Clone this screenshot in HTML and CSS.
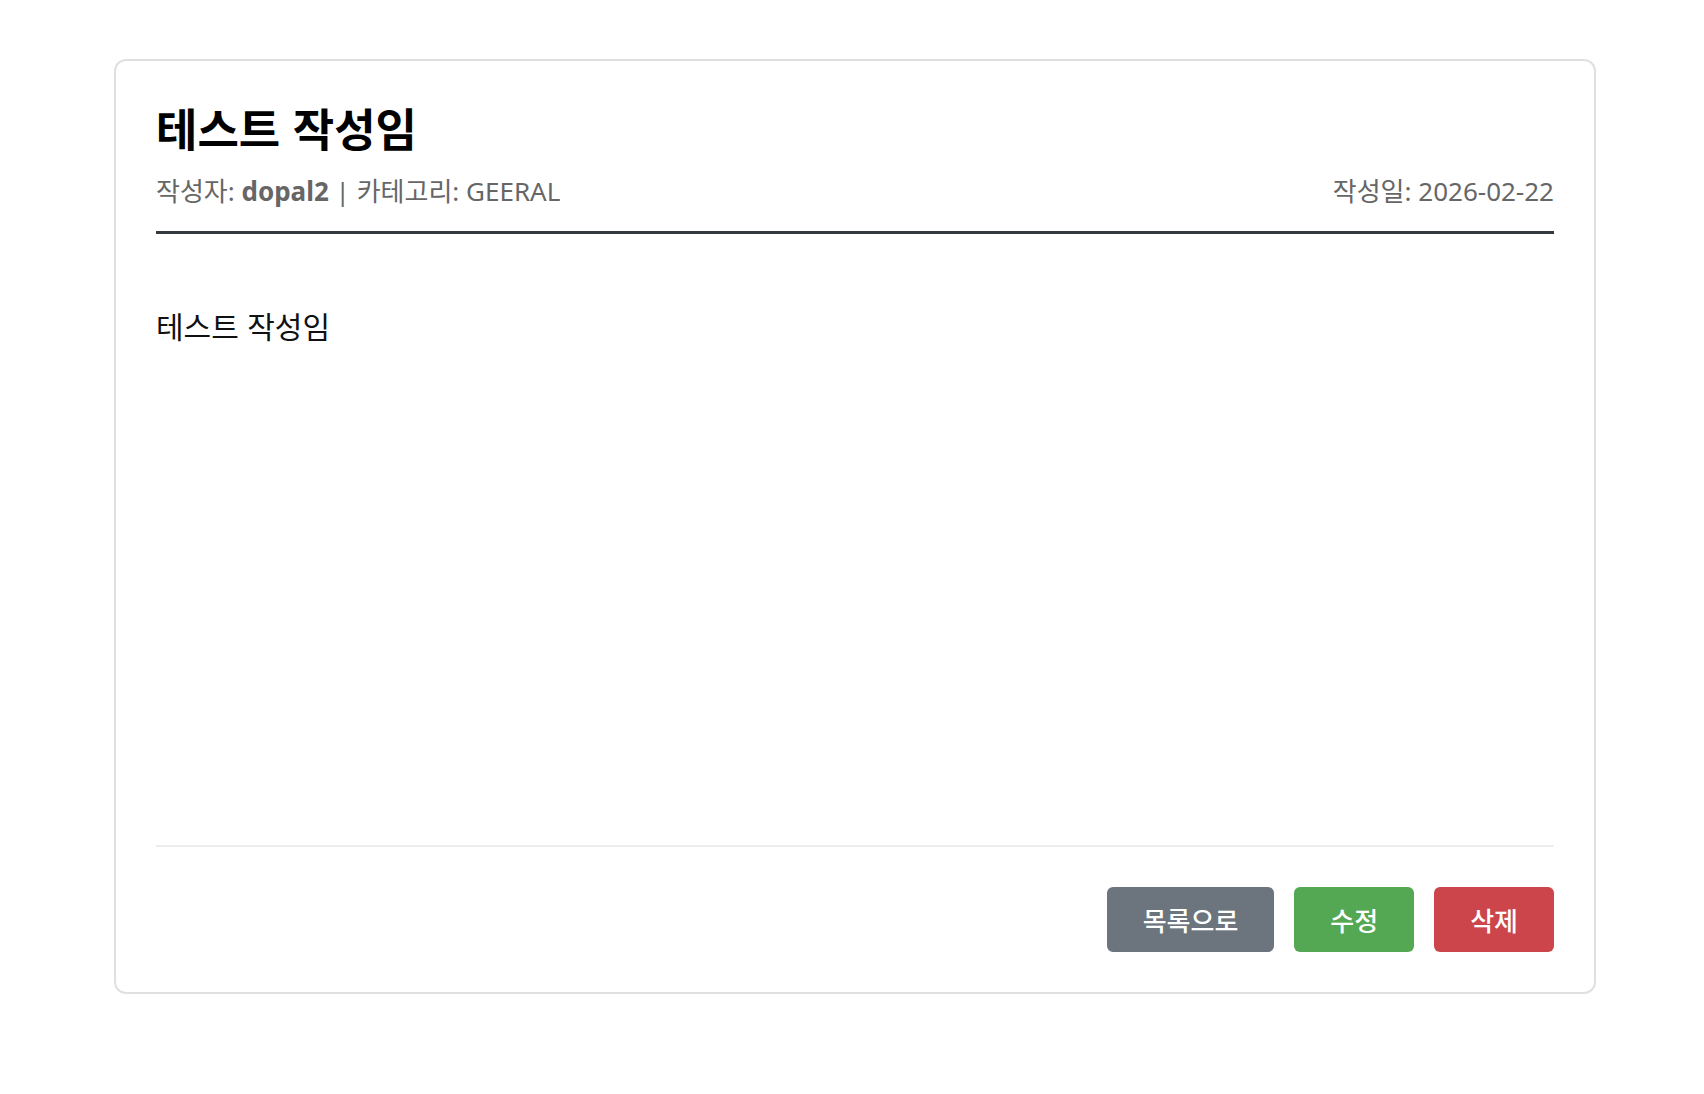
FILE: index.html
```html
<!DOCTYPE html>
<html lang="ko">
<head>
<meta charset="utf-8">
<title>테스트 작성임</title>
<link rel="stylesheet" href="styles.css">
</head>
<body>
<div class="card">
  <header class="post-header">
    <h1 class="post-title">테스트 작성임</h1>
    <div class="post-meta">
      <span class="meta-left">작성자: <b>dopal2</b> | 카테고리: GEERAL</span>
      <span class="meta-right">작성일: 2026-02-22</span>
    </div>
  </header>
  <section class="post-body">테스트 작성임</section>
  <footer class="post-actions">
    <button class="btn btn-gray">목록으로</button>
    <button class="btn btn-green">수정</button>
    <button class="btn btn-red">삭제</button>
  </footer>
</div>
</body>
</html>
```

FILE: styles.css
```css
* { box-sizing: border-box; }
html, body { margin: 0; padding: 0; background: #fff; }
body {
  padding-left: 6px;
  font-family: "Noto Sans CJK KR", "Noto Sans", sans-serif;
  color: #111;
}
.card {
  width: 1482px;
  margin: 59px auto 0;
  padding: 40px;
  border: 2px solid #e0e0e0;
  border-radius: 12px;
  background: #fff;
}
.post-header {
  border-bottom: 3px solid #343a40;
  padding-bottom: 21px;
}
.post-title {
  margin: 0;
  font-size: 45px;
  line-height: 53px;
  font-weight: 700;
  color: #000;
}
.post-meta {
  margin-top: 18px;
  display: flex;
  justify-content: space-between;
  font-family: "Noto Sans", "Noto Sans CJK KR", sans-serif;
  font-size: 26px;
  line-height: 38px;
  color: #666;
}
.post-meta b { font-weight: 700; }
.post-body {
  min-height: 611px;
  padding-top: 70px;
  font-size: 30px;
  line-height: 43px;
  color: #111;
}
.post-actions {
  border-top: 2px solid #ececec;
  padding-top: 40px;
  display: flex;
  justify-content: flex-end;
  gap: 20px;
}
.btn {
  height: 65px;
  padding: 0 36px;
  border: none;
  border-radius: 6px;
  color: #fff;
  font-family: inherit;
  font-size: 26px;
  font-weight: 500;
}
.btn-gray { background: #6c757d; }
.btn-green { background: #54a854; }
.btn-red { background: #cc454b; }
```
